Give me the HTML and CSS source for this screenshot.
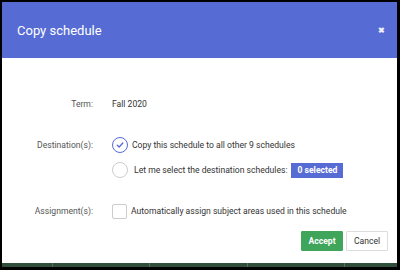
FILE: index.html
```html
<!DOCTYPE html>
<html lang="en">
<head>
  <meta charset="UTF-8" />
  <title>Copy schedule</title>
  <link rel="stylesheet" href="styles.css">
</head>
<body>
  <div class="dialog">
    <header class="dialog-head">
      <span>Copy schedule</span>
      <span class="close">&#10006;</span>
    </header>

    <div class="dialog-body">
      <div class="row row-term">
        <div class="label">Term:</div>
        <div class="value">Fall 2020</div>
      </div>

      <div class="row row-dest">
        <div class="label">Destination(s):</div>
        <div class="value options">
          <div class="option">
            <span class="radio checked">
              <svg width="8" height="8" viewBox="0 0 8 8"><path d="M1.2 4.2 L3.2 6 L6.8 2" fill="none" stroke="#566bd3" stroke-width="1.3" stroke-linecap="round" stroke-linejoin="round"/></svg>
            </span>
            <span>Copy this schedule to all other 9 schedules</span>
          </div>
          <div class="option option-select">
            <span class="radio"></span>
            <span>Let me select the destination schedules:</span>
            <span class="badge">0 selected</span>
          </div>
        </div>
      </div>

      <div class="row row-assign">
        <div class="label">Assignment(s):</div>
        <div class="value option">
          <span class="checkbox"></span>
          <span>Automatically assign subject areas used in this schedule</span>
        </div>
      </div>

      <div class="actions">
        <button class="btn btn-accept">Accept</button>
        <button class="btn btn-cancel">Cancel</button>
      </div>
    </div>
  </div>

  <div class="backdrop-strip">
    <div></div><div></div><div></div><div></div><div></div>
  </div>
</body>
</html>
```

FILE: styles.css
```css
body {
  margin: 0;
  background: #000;
  font-family: Roboto, 'Liberation Sans', sans-serif;
  height: 270px;
  overflow: hidden;
}
.dialog {
  margin: 2px 3px 0 2px;
  background: #fff;
}
.dialog-head {
  height: 56px;
  background: #566bd3;
  color: #fff;
  display: flex;
  align-items: center;
  justify-content: space-between;
  padding: 0 12px 0 15px;
  font-size: 13px;
}
.close {
  font-size: 8px;
  font-weight: bold;
  color: #eef0fa;
}
.dialog-body {
  padding: 38px 9px 12px 0;
  font-size: 8.6px;
  color: #333;
}
.row {
  display: grid;
  grid-template-columns: 91px 1fr;
  column-gap: 19px;
}
.label {
  text-align: right;
  color: #555;
  line-height: 16px;
}
.value {
  line-height: 16px;
}
.row-dest {
  margin-top: 25px;
}
.options {
  display: flex;
  flex-direction: column;
  gap: 9px;
}
.option {
  display: flex;
  align-items: center;
  gap: 4px;
}
.option-select {
  gap: 6px;
}
.radio {
  width: 14px;
  height: 14px;
  border: 1px solid #ccc;
  border-radius: 50%;
  display: flex;
  align-items: center;
  justify-content: center;
}
.radio.checked {
  border-color: #566bd3;
}
.badge {
  margin-left: -2px;
  background: #566bd3;
  color: #fff;
  font-weight: bold;
  line-height: 15px;
  padding: 0 6px;
}
.row-assign {
  margin-top: 25px;
}
.checkbox {
  width: 13px;
  height: 13px;
  border: 1px solid #ccc;
  border-radius: 2px;
}
.actions {
  display: flex;
  justify-content: flex-end;
  gap: 3px;
  margin-top: 12px;
}
.btn {
  height: 20px;
  width: 42px;
  font-family: inherit;
  font-size: 8.6px;
  border-radius: 1px;
  padding: 0;
}
.btn-accept {
  background: #3ea55b;
  border: 1px solid #3ea55b;
  color: #fff;
  font-weight: bold;
}
.btn-cancel {
  background: #fff;
  border: 1px solid #ddd;
  color: #333;
}
.backdrop-strip {
  margin: 0 3px 0 2px;
  height: 4px;
  background: #2f4f3a;
  display: grid;
  grid-template-columns: 50px 97px 98px 97px 1fr;
}
.backdrop-strip div + div {
  border-left: 1px solid #666;
}
```
